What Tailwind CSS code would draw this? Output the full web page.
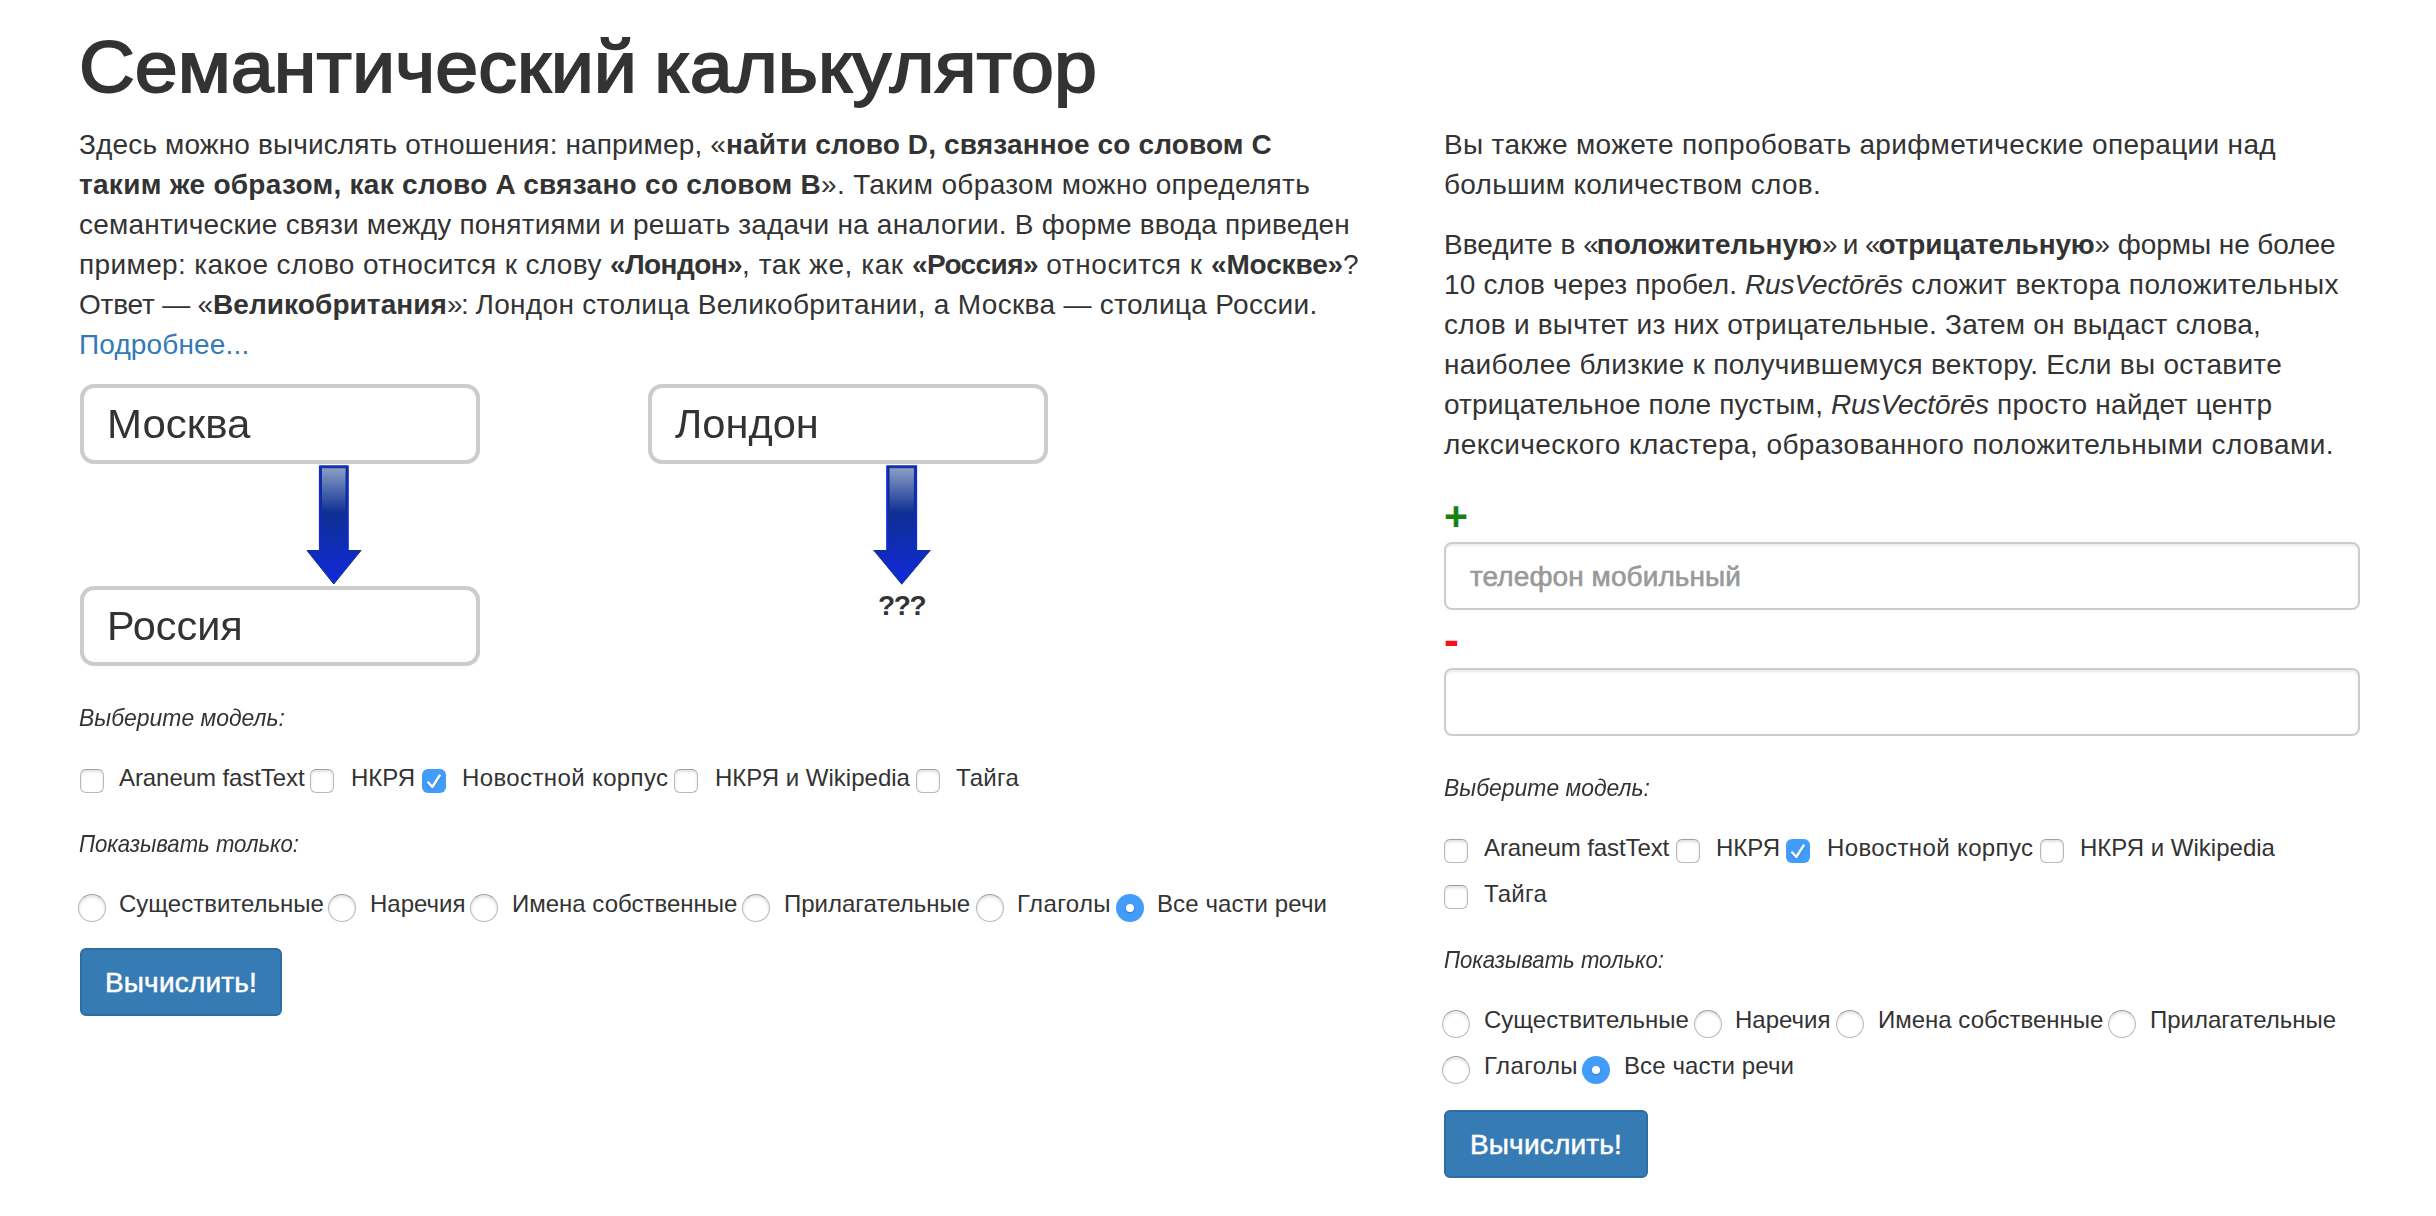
<!DOCTYPE html>
<html lang="ru">
<head>
<meta charset="utf-8">
<title>Семантический калькулятор</title>
<script src="https://cdn.jsdelivr.net/npm/@tailwindcss/browser@4"></script>
</head>
<body class="bg-white text-[#333] font-['Liberation_Sans',Arial,sans-serif] text-[28px] leading-10 pt-[27px] pl-20 overflow-hidden">
<svg class="absolute size-0">
  <defs>
    <linearGradient id="arrow-body" x1="0" y1="0" x2="0" y2="1">
      <stop offset="0" stop-color="#0d2f93"/><stop offset=".4" stop-color="#0d2f93"/><stop offset="1" stop-color="#1229dd"/>
    </linearGradient>
    <linearGradient id="arrow-shine" x1="0" y1="0" x2="0" y2="1">
      <stop offset="0" stop-color="#8c9fc6"/><stop offset="1" stop-color="#0d2f93"/>
    </linearGradient>
    <symbol id="arrow" viewBox="0 0 56 120" preserveAspectRatio="none">
      <path d="M13.500 1h28.500v84.500h13l-27.250 33.500L1 85.500h12.500z" fill="url(#arrow-body)" stroke="#12308a" stroke-width="1"/>
      <path d="M13.700 85V1.200h28.100V85" fill="none" stroke="#1229d6" stroke-width="1.600"/>
      <path d="M15.500 2.800h24.500v45h-24.500z" fill="url(#arrow-shine)"/>
      <path d="M15.500 45V2.800h24.500V45" fill="none" stroke="#0c2c86" stroke-opacity=".8"/>
    </symbol>
  </defs>
</svg>
<h1 class="-ml-px h-20 w-fit leading-20 text-[72px] whitespace-nowrap origin-left scale-x-[1.073] [word-spacing:-4px] [-webkit-text-stroke:1.8px_#333]">Семантический калькулятор</h1>
<main class="mt-[18px] flex whitespace-nowrap">
  <section class="w-[1364px] shrink-0">
    <p class="-ml-px">
      <span class="tracking-[0.141px]">Здесь можно вычислять отношения: например, «</span><b class="tracking-[0.139px]">найти слово D, связанное со словом C</b><br>
      <b class="tracking-[0.283px]">таким же образом, как слово A связано со словом B</b><span class="tracking-[0.33px]">». Таким образом можно определять</span><br>
      <span class="tracking-[0.208px]">семантические связи между понятиями и решать задачи на аналогии. В форме ввода приведен</span><br>
      <span class="tracking-[0.379px]">пример: какое слово относится к слову </span><b class="tracking-[-0.576px]">«Лондон»</b><span class="tracking-[0.571px]">, так же, как </span><b class="tracking-[-0.57px]">«Россия»</b><span class="tracking-[0.56px]"> относится к </span><b class="tracking-[-0.152px]">«Москве»</b>?<br>
      <span class="tracking-[-0.196px]">Ответ — «</span><b class="tracking-[0.078px]">Великобритания</b><span class="tracking-[-1.5px]">»:</span><span class="tracking-[0.32px]"> Лондон столица Великобритании, а Москва — столица России.</span><br>
      <a href="#" class="text-[#337ab7] tracking-[0.15px]">Подробнее...</a>
    </p>
    <div class="mt-[19px] h-[317px] flex gap-[168px]">
      <div class="w-[400px]">
        <div class="h-20 border-4 border-[#ccc] rounded-[14px] pl-[23px] text-[40px] leading-[73px]"><span class="inline-block origin-left scale-x-[1.05]">Москва</span></div>
        <svg class="block ml-[226px] mt-[1px] mb-[1px] w-[56px] h-[120px]"><use href="#arrow"/></svg>
        <div class="h-20 border-4 border-[#ccc] rounded-[14px] pl-[23px] text-[40px] leading-[73px]"><span class="inline-block origin-left scale-x-[1.035]">Россия</span></div>
      </div>
      <div class="w-[400px]">
        <div class="h-20 border-4 border-[#ccc] rounded-[14px] pl-[23px] text-[40px] leading-[73px]"><span class="inline-block origin-left scale-x-[1.04]">Лондон</span></div>
        <svg class="block ml-[225px] mt-[1px] mb-[1px] w-[58px] h-[120px]"><use href="#arrow"/></svg>
        <b class="block pl-[230px] leading-10 tracking-[-1.3px]">???</b>
      </div>
    </div>
    <p class="-ml-px h-[34px] leading-[34px] text-2xl italic w-fit origin-left scale-x-[0.955]">Выберите модель:</p>
    <div class="mt-5 flex text-2xl leading-[46px]">
      <label class="w-[230px] flex"><i class="mt-3.5 mr-[15px] size-6 shrink-0 rounded-[6px] border border-[#b9b9b9] border-t-[#a0a0a0] shadow-[inset_0_2px_3px_rgba(0,0,0,0.12)]"></i><span class="tracking-[-0.078px]">Araneum fastText</span></label>
      <label class="w-[112px] flex"><i class="mt-3.5 mr-[17px] size-6 shrink-0 rounded-[6px] border border-[#b9b9b9] border-t-[#a0a0a0] shadow-[inset_0_2px_3px_rgba(0,0,0,0.12)]"></i><span>НКРЯ</span></label>
      <label class="w-[252px] flex"><i class="mt-3.5 mr-4 size-6 shrink-0 rounded-[6px] bg-[#429cfa]"><svg viewBox="0 0 24 24" class="size-6 drop-shadow-[0_1px_1px_rgba(0,0,0,0.2)]"><path d="M6.300 13.500l4 4.500L17.600 6.500" fill="none" stroke="#fff" stroke-width="2.400" stroke-linecap="round" stroke-linejoin="round"/></svg></i><span class="tracking-[0.38px]">Новостной корпус</span></label>
      <label class="w-[242px] flex"><i class="mt-3.5 mr-[17px] size-6 shrink-0 rounded-[6px] border border-[#b9b9b9] border-t-[#a0a0a0] shadow-[inset_0_2px_3px_rgba(0,0,0,0.12)]"></i><span>НКРЯ и Wikipedia</span></label>
      <label class="flex"><i class="mt-3.5 mr-4 size-6 shrink-0 rounded-[6px] border border-[#b9b9b9] border-t-[#a0a0a0] shadow-[inset_0_2px_3px_rgba(0,0,0,0.12)]"></i><span class="tracking-[0.216px]">Тайга</span></label>
    </div>
    <p class="-ml-px mt-[26px] h-[34px] leading-[34px] text-2xl italic w-fit origin-left scale-x-[0.923]">Показывать только:</p>
    <div class="mt-5 -ml-0.5 flex text-2xl leading-[46px]">
      <label class="w-[250px] flex"><i class="mt-[13px] mr-[13px] size-7 shrink-0 rounded-full border border-[#b9b9b9] border-t-[#a0a0a0] shadow-[inset_0_2px_3px_rgba(0,0,0,0.12)]"></i><span>Существительные</span></label>
      <label class="w-[142px] flex"><i class="mt-[13px] mr-3.5 size-7 shrink-0 rounded-full border border-[#b9b9b9] border-t-[#a0a0a0] shadow-[inset_0_2px_3px_rgba(0,0,0,0.12)]"></i><span>Наречия</span></label>
      <label class="w-[272px] flex"><i class="mt-[13px] mr-3.5 size-7 shrink-0 rounded-full border border-[#b9b9b9] border-t-[#a0a0a0] shadow-[inset_0_2px_3px_rgba(0,0,0,0.12)]"></i><span>Имена собственные</span></label>
      <label class="w-[234px] flex"><i class="mt-[13px] mr-3.5 size-7 shrink-0 rounded-full border border-[#b9b9b9] border-t-[#a0a0a0] shadow-[inset_0_2px_3px_rgba(0,0,0,0.12)]"></i><span>Прилагательные</span></label>
      <label class="w-[140px] flex"><i class="mt-[13px] mr-[13px] size-7 shrink-0 rounded-full border border-[#b9b9b9] border-t-[#a0a0a0] shadow-[inset_0_2px_3px_rgba(0,0,0,0.12)]"></i><span class="tracking-[0.384px]">Глаголы</span></label>
      <label class="flex"><i class="mt-[13px] mr-[13px] size-7 shrink-0 rounded-full bg-[#429cfa] grid place-items-center"><i class="size-2 rounded-full bg-white shadow-[0_1px_2px_rgba(0,0,0,0.25)]"></i></i><span class="tracking-[0.089px]">Все части речи</span></label>
    </div>
    <button class="mt-[21px] block w-[202px] h-[68px] rounded-[6px] border-2 border-[#2e6da4] bg-[#377bb5] pt-px text-white tracking-[0.2px] [-webkit-text-stroke:0.5px_#fff]">Вычислить!</button>
  </section>
  <section class="w-[916px] shrink-0">
    <p><span class="tracking-[0.334px]">Вы также можете попробовать арифметические операции над</span><br>
      <span class="tracking-[0.297px]">большим количеством слов.</span></p>
    <p class="mt-5"><span class="tracking-[0.05px]">Введите в </span><span class="tracking-[-2px]">«</span><b>положительную</b><span class="tracking-[-2px]">»</span><span class="tracking-[-0.6px]"> и </span><span class="tracking-[-2px]">«</span><b class="tracking-[-0.173px]">отрицательную</b><span class="tracking-[-0.062px]">» формы не более</span><br>
      <span class="tracking-[0.151px]">10 слов через пробел. </span><em class="tracking-[-0.114px]">RusVectōrēs</em><span class="tracking-[0.468px]"> сложит вектора положительных</span><br>
      <span class="tracking-[0.207px]">слов и вычтет из них отрицательные. Затем он выдаст слова,</span><br>
      <span class="tracking-[0.284px]">наиболее близкие к получившемуся вектору. Если вы оставите</span><br>
      <span class="tracking-[0.153px]">отрицательное поле пустым, </span><em class="tracking-[-0.114px]">RusVectōrēs</em><span class="tracking-[0.3px]"> просто найдет центр</span><br>
      <span class="tracking-[0.425px]">лексического кластера, образованного положительными словами.</span></p>
    <b class="mt-[26px] block h-[51px] leading-[51px] text-[41px] text-[#138313]">+</b>
    <div class="h-[68px] border-2 border-[#ccc] rounded-[8px] shadow-[inset_0_2px_2px_rgba(0,0,0,0.075)] pl-6 leading-[66px] text-[#999] tracking-[0.084px] [-webkit-text-stroke:0.6px_#999]">телефон мобильный</div>
    <b class="mt-1.5 block h-[52px] leading-[47px] text-[45px] text-[#fc0d1b]">-</b>
    <div class="h-[68px] border-2 border-[#ccc] rounded-[8px] shadow-[inset_0_2px_2px_rgba(0,0,0,0.075)]"></div>
    <p class="mt-[35px] h-[34px] leading-[34px] text-2xl italic w-fit origin-left scale-x-[0.955]">Выберите модель:</p>
    <div class="mt-5 flex flex-wrap text-2xl leading-[46px]">
      <label class="w-[232px] flex"><i class="mt-3.5 mr-4 size-6 shrink-0 rounded-[6px] border border-[#b9b9b9] border-t-[#a0a0a0] shadow-[inset_0_2px_3px_rgba(0,0,0,0.12)]"></i><span class="tracking-[-0.1px]">Araneum fastText</span></label>
      <label class="w-[110px] flex"><i class="mt-3.5 mr-4 size-6 shrink-0 rounded-[6px] border border-[#b9b9b9] border-t-[#a0a0a0] shadow-[inset_0_2px_3px_rgba(0,0,0,0.12)]"></i><span>НКРЯ</span></label>
      <label class="w-[254px] flex"><i class="mt-3.5 mr-[17px] size-6 shrink-0 rounded-[6px] bg-[#429cfa]"><svg viewBox="0 0 24 24" class="size-6 drop-shadow-[0_1px_1px_rgba(0,0,0,0.2)]"><path d="M6.300 13.500l4 4.500L17.600 6.500" fill="none" stroke="#fff" stroke-width="2.400" stroke-linecap="round" stroke-linejoin="round"/></svg></i><span class="tracking-[0.38px]">Новостной корпус</span></label>
      <label class="w-[300px] flex"><i class="mt-3.5 mr-4 size-6 shrink-0 rounded-[6px] border border-[#b9b9b9] border-t-[#a0a0a0] shadow-[inset_0_2px_3px_rgba(0,0,0,0.12)]"></i><span>НКРЯ и Wikipedia</span></label>
      <label class="flex"><i class="mt-3.5 mr-4 size-6 shrink-0 rounded-[6px] border border-[#b9b9b9] border-t-[#a0a0a0] shadow-[inset_0_2px_3px_rgba(0,0,0,0.12)]"></i><span class="tracking-[0.216px]">Тайга</span></label>
    </div>
    <p class="mt-[26px] h-[34px] leading-[34px] text-2xl italic w-fit origin-left scale-x-[0.923]">Показывать только:</p>
    <div class="mt-5 -ml-0.5 flex flex-wrap text-2xl leading-[46px]">
      <label class="w-[252px] flex"><i class="mt-[13px] mr-3.5 size-7 shrink-0 rounded-full border border-[#b9b9b9] border-t-[#a0a0a0] shadow-[inset_0_2px_3px_rgba(0,0,0,0.12)]"></i><span>Существительные</span></label>
      <label class="w-[142px] flex"><i class="mt-[13px] mr-[13px] size-7 shrink-0 rounded-full border border-[#b9b9b9] border-t-[#a0a0a0] shadow-[inset_0_2px_3px_rgba(0,0,0,0.12)]"></i><span>Наречия</span></label>
      <label class="w-[272px] flex"><i class="mt-[13px] mr-3.5 size-7 shrink-0 rounded-full border border-[#b9b9b9] border-t-[#a0a0a0] shadow-[inset_0_2px_3px_rgba(0,0,0,0.12)]"></i><span>Имена собственные</span></label>
      <label class="w-[250px] flex"><i class="mt-[13px] mr-3.5 size-7 shrink-0 rounded-full border border-[#b9b9b9] border-t-[#a0a0a0] shadow-[inset_0_2px_3px_rgba(0,0,0,0.12)]"></i><span>Прилагательные</span></label>
      <label class="w-[140px] flex"><i class="mt-[13px] mr-3.5 size-7 shrink-0 rounded-full border border-[#b9b9b9] border-t-[#a0a0a0] shadow-[inset_0_2px_3px_rgba(0,0,0,0.12)]"></i><span class="tracking-[0.384px]">Глаголы</span></label>
      <label class="flex"><i class="mt-[13px] mr-3.5 size-7 shrink-0 rounded-full bg-[#429cfa] grid place-items-center"><i class="size-2 rounded-full bg-white shadow-[0_1px_2px_rgba(0,0,0,0.25)]"></i></i><span class="tracking-[0.089px]">Все части речи</span></label>
    </div>
    <button class="mt-[21px] block w-[204px] h-[68px] rounded-[6px] border-2 border-[#2e6da4] bg-[#377bb5] pt-px text-white tracking-[0.2px] [-webkit-text-stroke:0.5px_#fff]">Вычислить!</button>
  </section>
</main>
</body>
</html>
